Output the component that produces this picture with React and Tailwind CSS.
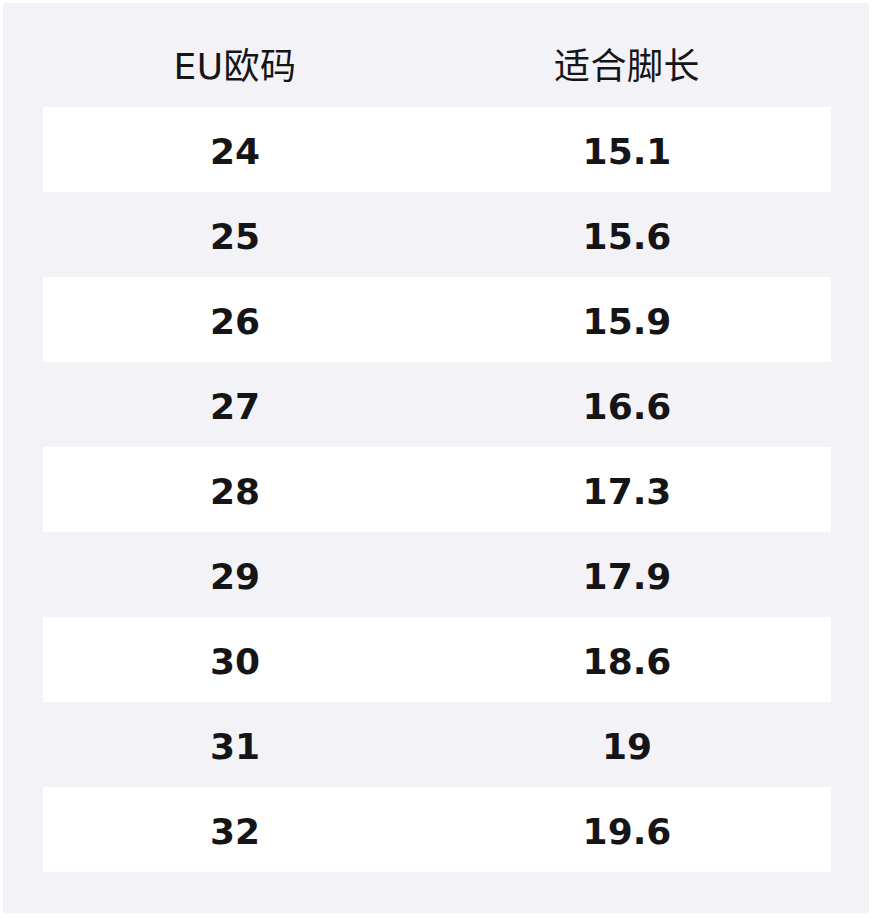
const ROWS = [
  ["24", "15.1"],
  ["25", "15.6"],
  ["26", "15.9"],
  ["27", "16.6"],
  ["28", "17.3"],
  ["29", "17.9"],
  ["30", "18.6"],
  ["31", "19"],
  ["32", "19.6"],
];

export default function App() {
  return (
    <div className="w-[874px] h-[918px] bg-white p-[3px] pr-[5px] pb-[5px] font-['DejaVu_Sans','Noto_Sans_CJK_SC',sans-serif] text-[#151517]">
      <div className="h-[910px] bg-[#f2f2f7] pt-6 pl-10 pr-[38px]">
        <div className="grid grid-cols-[384px_400px] h-20 items-center text-[36px] text-center tracking-[0.5px]">
          <div>EU欧码</div>
          <div>适合脚长</div>
        </div>
        {ROWS.map(([eu, len], i) => (
          <div
            key={eu}
            className={
              "grid grid-cols-[384px_400px] h-[85px] pt-1 items-center text-center text-[36px] font-bold " +
              (i % 2 === 0 ? "bg-white" : "bg-[#f2f2f7]")
            }
          >
            <div>{eu}</div>
            <div>{len}</div>
          </div>
        ))}
      </div>
    </div>
  );
}
